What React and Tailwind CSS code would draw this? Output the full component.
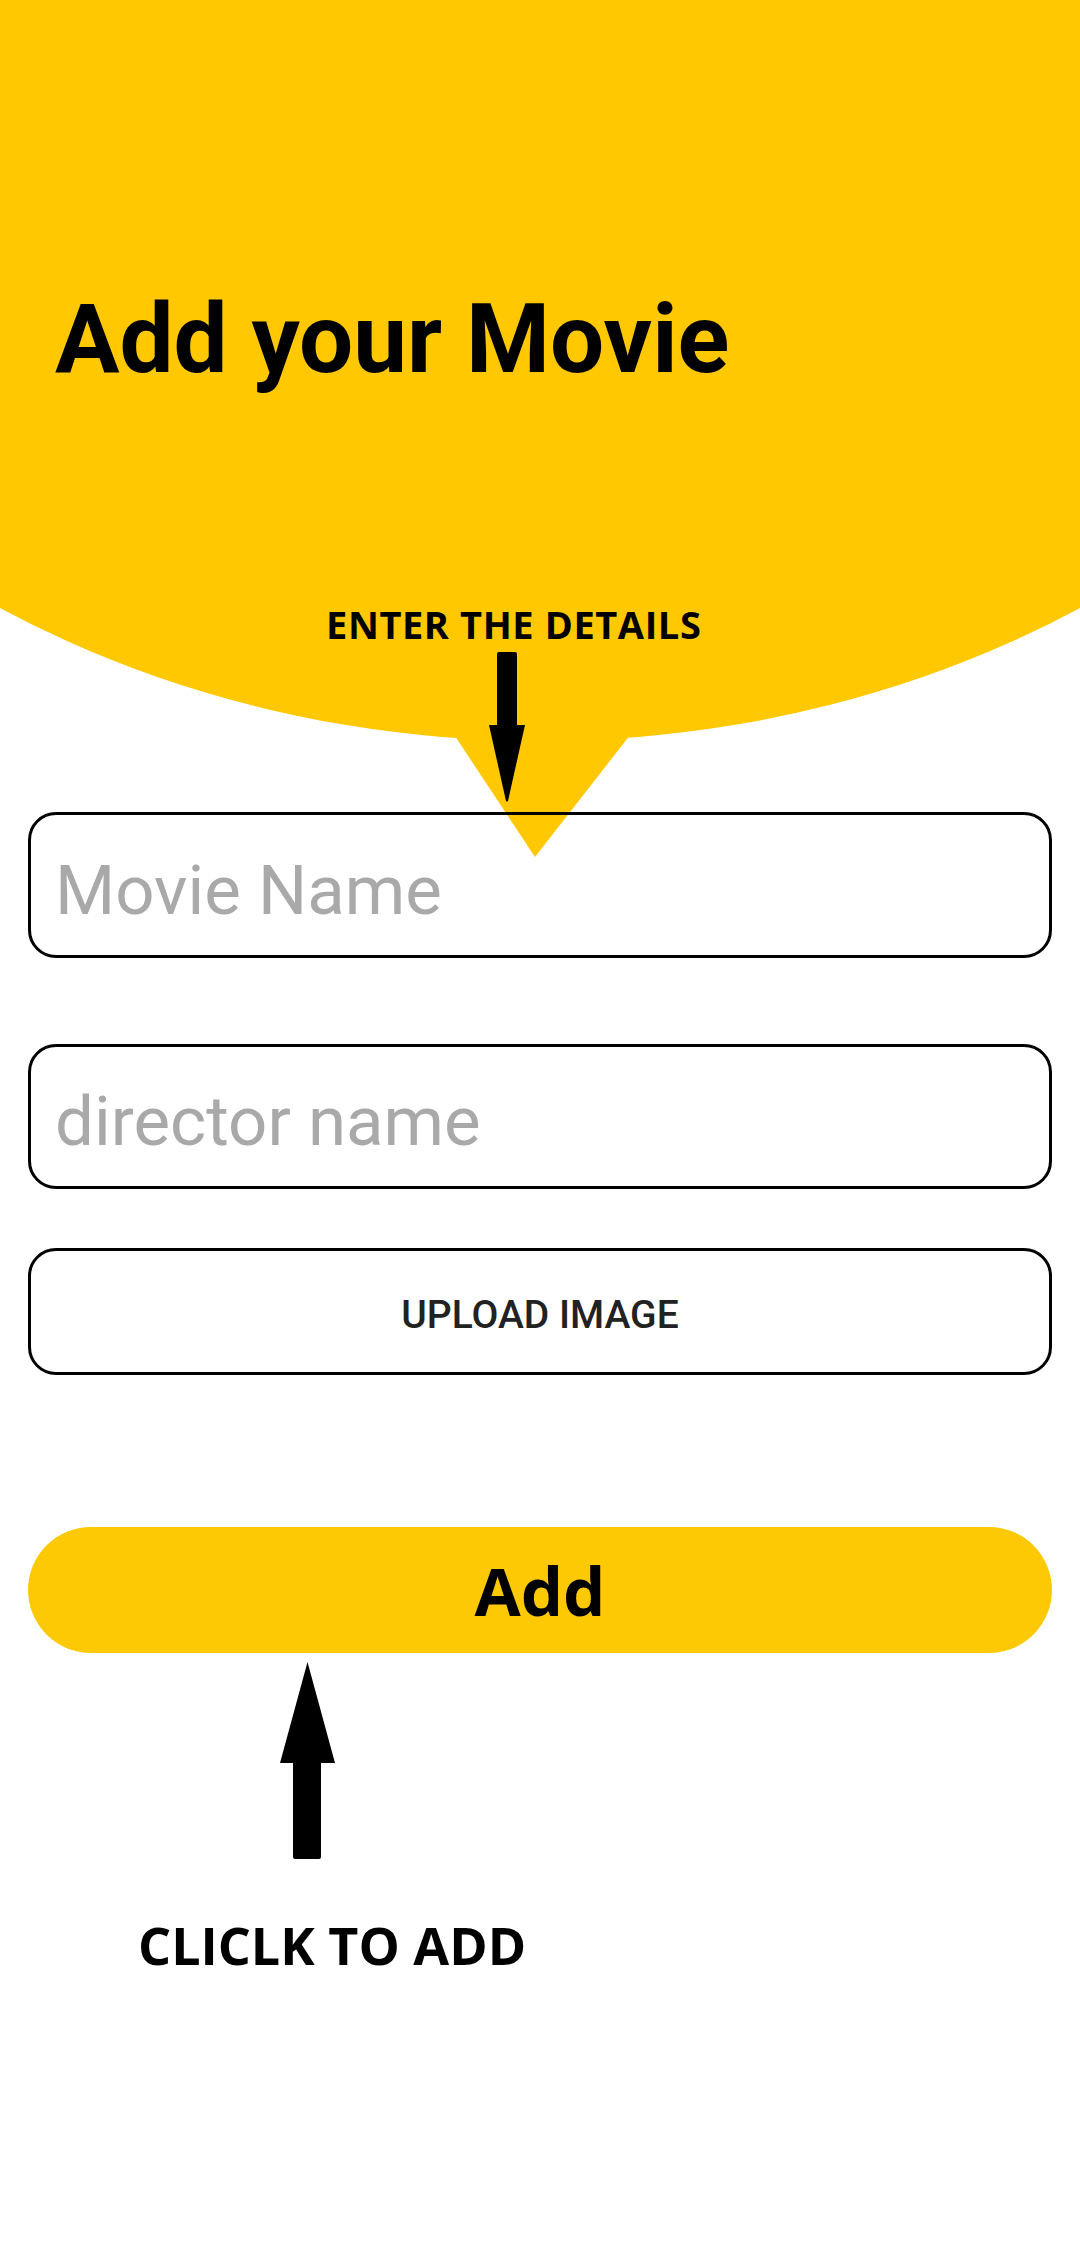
import React from 'react';

// Add Movie screen - yellow speech-bubble header, form fields and annotations
const App = () => {
  return (
    <div className="relative w-[1080px] min-h-[2249px] bg-white overflow-hidden font-['Roboto',sans-serif] text-black">
      {/* Yellow bubble backdrop */}
      <svg className="absolute left-0 top-0" width="1080" height="860" viewBox="0 0 1080 860">
        <ellipse cx="540" cy="-99" rx="1000" ry="840" fill="#ffc801" />
        <polygon points="451,730 634,730 535,857" fill="#ffc801" />
      </svg>

      <div className="relative flex flex-col">
        <h1 className="mt-[291px] pl-[55px] text-[96px] leading-none font-bold">Add your Movie</h1>

        <p className="mt-[218px] pl-[326px] font-['Open_Sans',sans-serif] text-[38px] font-bold leading-none tracking-[0.6px]">
          ENTER THE DETAILS
        </p>

        {/* Down arrow */}
        <svg className="ml-[489px] mt-[9px]" width="36" height="150" viewBox="0 0 36 150">
          <path d="M8 2 Q8 0 10 0 H26 Q28 0 28 2 V73 H36 L19 149 Q18 150 17 149 L0 73 H8 Z" fill="#000" />
        </svg>

        {/* Form */}
        <div className="mt-[10px] mx-[28px] flex flex-col">
          <input
            type="text"
            placeholder="Movie Name"
            className="h-[146px] w-full rounded-[28px] border-[3px] border-black bg-transparent pl-[24px] pt-[10px] text-[69px] outline-none placeholder:text-[#a9a9a9]"
          />
          <input
            type="text"
            placeholder="director name"
            className="mt-[86px] h-[145px] w-full rounded-[28px] border-[3px] border-black bg-transparent pl-[24px] pt-[10px] text-[69px] outline-none placeholder:text-[#a9a9a9]"
          />
          <button className="mt-[59px] h-[127px] w-full rounded-[28px] border-[3px] border-black bg-transparent pt-[7px] text-[39px] font-medium text-[#222]">
            UPLOAD IMAGE
          </button>
          <button className="mt-[152px] h-[126px] w-full rounded-full bg-[#fdc904] font-['Open_Sans',sans-serif] text-[67px] font-bold leading-none">
            Add
          </button>
        </div>

        {/* Up arrow */}
        <svg className="ml-[280px] mt-[9px]" width="55" height="197" viewBox="0 0 55 197">
          <path d="M27.5 0 L55 101 H41 V195 Q41 197 39 197 H15 Q13 197 13 195 V101 H0 Z" fill="#000" />
        </svg>

        <p className="mt-[60px] pl-[138px] font-['Open_Sans',sans-serif] text-[52px] font-bold leading-none">
          CLICLK TO ADD
        </p>
      </div>
    </div>
  );
};

export default App;
